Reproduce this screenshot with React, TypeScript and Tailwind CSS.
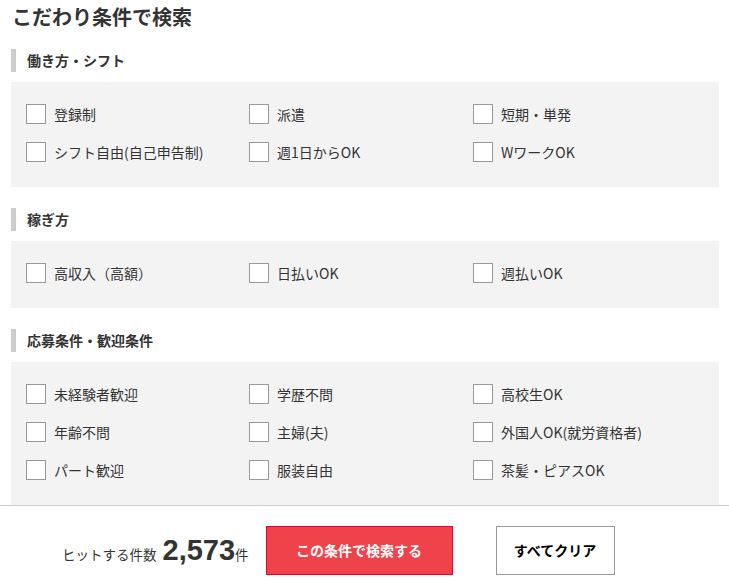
import React from 'react';

interface Section {
  title: string;
  items: string[];
}

const SECTIONS: Section[] = [
  {
    title: '働き方・シフト',
    items: ['登録制', '派遣', '短期・単発', 'シフト自由(自己申告制)', '週1日からOK', 'WワークOK'],
  },
  {
    title: '稼ぎ方',
    items: ['高収入（高額）', '日払いOK', '週払いOK'],
  },
  {
    title: '応募条件・歓迎条件',
    items: [
      '未経験者歓迎',
      '学歴不問',
      '高校生OK',
      '年齢不問',
      '主婦(夫)',
      '外国人OK(就労資格者)',
      'パート歓迎',
      '服装自由',
      '茶髪・ピアスOK',
    ],
  },
];

const FONT = { fontFamily: '"Noto Sans CJK JP", "Noto Sans", sans-serif' };

function CheckItem({ label }: { label: string }) {
  return (
    <label className="flex h-[38px] items-center gap-2 cursor-pointer">
      <span className="h-5 w-5 flex-shrink-0 border border-[#999] bg-white" />
      <span className="text-[14px] leading-none text-[#333]">{label}</span>
    </label>
  );
}

function ConditionSection({ section, first }: { section: Section; first: boolean }) {
  return (
    <div className={first ? 'mt-[15px]' : 'mt-[21px]'}>
      <h3 className="ml-[11px] flex h-[23px] items-center border-l-[5px] border-[#ccc] pl-[11px] text-[14px] font-bold text-[#333]">
        {section.title}
      </h3>
      <div className="mx-[11px] mt-[10px] w-[708px] bg-[#f3f3f3] pt-[13px] pb-[16px] pl-[15px]">
        <div className="grid grid-cols-[223px_224px_1fr]">
          {section.items.map((item) => (
            <CheckItem key={item} label={item} />
          ))}
        </div>
      </div>
    </div>
  );
}

export default function App() {
  return (
    <div className="flex h-[586px] w-[729px] flex-col bg-white" style={FONT}>
      {/* Content */}
      <div className="flex-1 overflow-hidden">
        <h2 className="pl-[12px] text-[20px] font-bold leading-[34px] text-[#333]">こだわり条件で検索</h2>
        {SECTIONS.map((s, i) => (
          <ConditionSection key={s.title} section={s} first={i === 0} />
        ))}
      </div>

      {/* Footer */}
      <div className="h-[81px] flex-shrink-0 border-t border-[#ccc] bg-white pt-[20px]">
        <div className="flex items-center pl-[62px]">
          <div className="flex items-baseline text-[#333]">
            <span className="text-[13.5px]">ヒットする件数</span>
            <span
              className="ml-[6px] text-[29px] font-bold leading-none"
              style={{ fontFamily: '"Liberation Sans", Arial, sans-serif' }}
            >
              2,573
            </span>
            <span className="text-[13.5px]">件</span>
          </div>
          <button className="ml-[17px] h-[49px] w-[187px] border border-[#e5003a] bg-[#ef424b] text-[14px] font-bold text-white">
            この条件で検索する
          </button>
          <button className="ml-[43px] h-[49px] w-[119px] border border-[#999] bg-white text-[14px] font-bold text-black">
            すべてクリア
          </button>
        </div>
      </div>
    </div>
  );
}
